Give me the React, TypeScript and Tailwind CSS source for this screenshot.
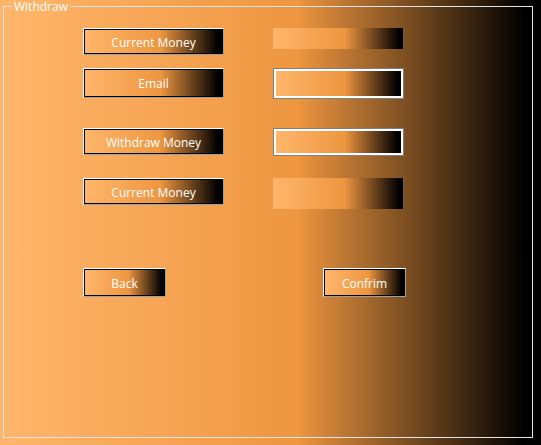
import React from "react";

const grad = "bg-[linear-gradient(to_right,#ffb66b_0%,#ee9640_55%,#000_97%)]";

function Btn({ label, w, h }: { label: string; w: string; h: string }) {
  return (
    <div className={`${w} ${h} border border-t-white border-l-white border-b-[#a0a0a0] border-r-[#a0a0a0] shrink-0`}>
      <div className={`h-full border border-black bg-[linear-gradient(to_right,#ffb66b_0%,#ee9640_55%,#000_97%)] flex items-center justify-center text-white leading-[14px] pt-[2px]`}>
        {label}
      </div>
    </div>
  );
}

function BoxBordered({ h }: { h: string }) {
  return (
    <div className={`w-[131px] ${h} border border-[#808080] shrink-0`}>
      <div className="h-full border-2 border-white bg-[linear-gradient(to_right,#ffb66b_0%,#ee9640_55%,#000_97%)]" />
    </div>
  );
}

function BoxFlat({ h }: { h: string }) {
  return (
    <div className={`w-[131px] ${h} border-r border-r-[#6b5d50] shrink-0 bg-[linear-gradient(to_right,#ffb66b_0%,#ee9640_55%,#000_97%)]`} />
  );
}

export default function App() {
  return (
    <div
      className={`w-[541px] h-[445px] ${grad} px-[3px] font-['Open_Sans',Arial,sans-serif] text-[12px] text-white overflow-hidden`}
    >
      <fieldset className="w-[530px] h-[438px] border border-[#e4e4e4] m-0 p-0 min-w-0">
        <legend className="ml-[8px] px-[2px] leading-[13px] text-white">Withdraw</legend>
        <div className="flex flex-col pl-[79px] pt-[15px]">
          <div className="flex items-start gap-[49px]">
            <Btn label="Current Money" w="w-[141px]" h="h-[27px]" />
            <BoxFlat h="h-[21px]" />
          </div>
          <div className="flex items-start gap-[49px] mt-[13px]">
            <Btn label="Email" w="w-[141px]" h="h-[30px]" />
            <BoxBordered h="h-[31px]" />
          </div>
          <div className="flex items-start gap-[49px] mt-[29px]">
            <Btn label="Withdraw Money" w="w-[141px]" h="h-[27px]" />
            <BoxBordered h="h-[28px]" />
          </div>
          <div className="flex items-start gap-[49px] mt-[22px]">
            <Btn label="Current Money" w="w-[141px]" h="h-[27px]" />
            <BoxFlat h="h-[31px]" />
          </div>
          <div className="flex items-start gap-[157px] mt-[59px]">
            <Btn label="Back" w="w-[83px]" h="h-[29px]" />
            <Btn label="Confrim" w="w-[83px]" h="h-[29px]" />
          </div>
        </div>
      </fieldset>
    </div>
  );
}
